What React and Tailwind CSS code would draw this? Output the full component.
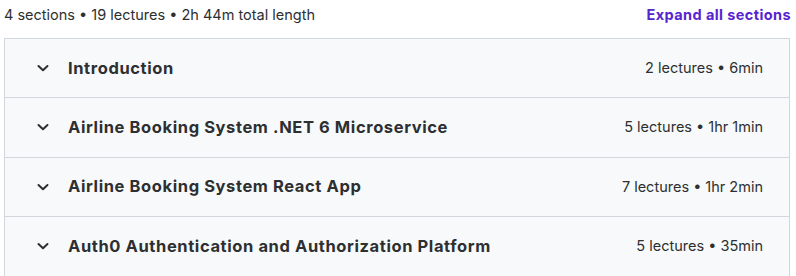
const sections = [
  { title: 'Introduction', meta: '2 lectures • 6min' },
  { title: 'Airline Booking System .NET 6 Microservice', meta: '5 lectures • 1hr 1min' },
  { title: 'Airline Booking System React App', meta: '7 lectures • 1hr 2min' },
  { title: 'Auth0 Authentication and Authorization Platform', meta: '5 lectures • 35min' },
];

function Chevron() {
  return (
    <svg width="12" height="12" viewBox="0 0 12 12" fill="none" className="shrink-0">
      <path d="M1.5 4 L6 8.3 L10.5 4" stroke="#2d2f31" strokeWidth="2" strokeLinecap="round" strokeLinejoin="round" />
    </svg>
  );
}

export default function App() {
  return (
    <div className="bg-white w-[796px] h-[276px] overflow-hidden pl-[4px] pr-[6px] text-[#2d2f31]" style={{ fontFamily: 'Inter, "Noto Sans", sans-serif' }}>
      <div className="h-[30px] flex items-center justify-between mb-[8px]">
        <span className="text-[14.5px]">4 sections • 19 lectures • 2h 44m total length</span>
        <span className="text-[14.5px] font-bold tracking-[0.4px] text-[#5624d0] mr-[-1px]">Expand all sections</span>
      </div>
      <div className="border border-[#d1d7dc] border-b-0">
        {sections.map((s, i) => (
          <div
            key={s.title}
            className={`flex items-center bg-[#f7f9fa] pl-[32px] pr-[26px] ${i > 0 ? 'h-[59.5px] border-t border-[#d1d7dc]' : 'h-[58px]'}`}
          >
            <Chevron />
            <span className="ml-[19px] text-[16.5px] font-bold tracking-[0.6px] flex-1">{s.title}</span>
            <span className="text-[14.5px]">{s.meta}</span>
          </div>
        ))}
      </div>
    </div>
  );
}
